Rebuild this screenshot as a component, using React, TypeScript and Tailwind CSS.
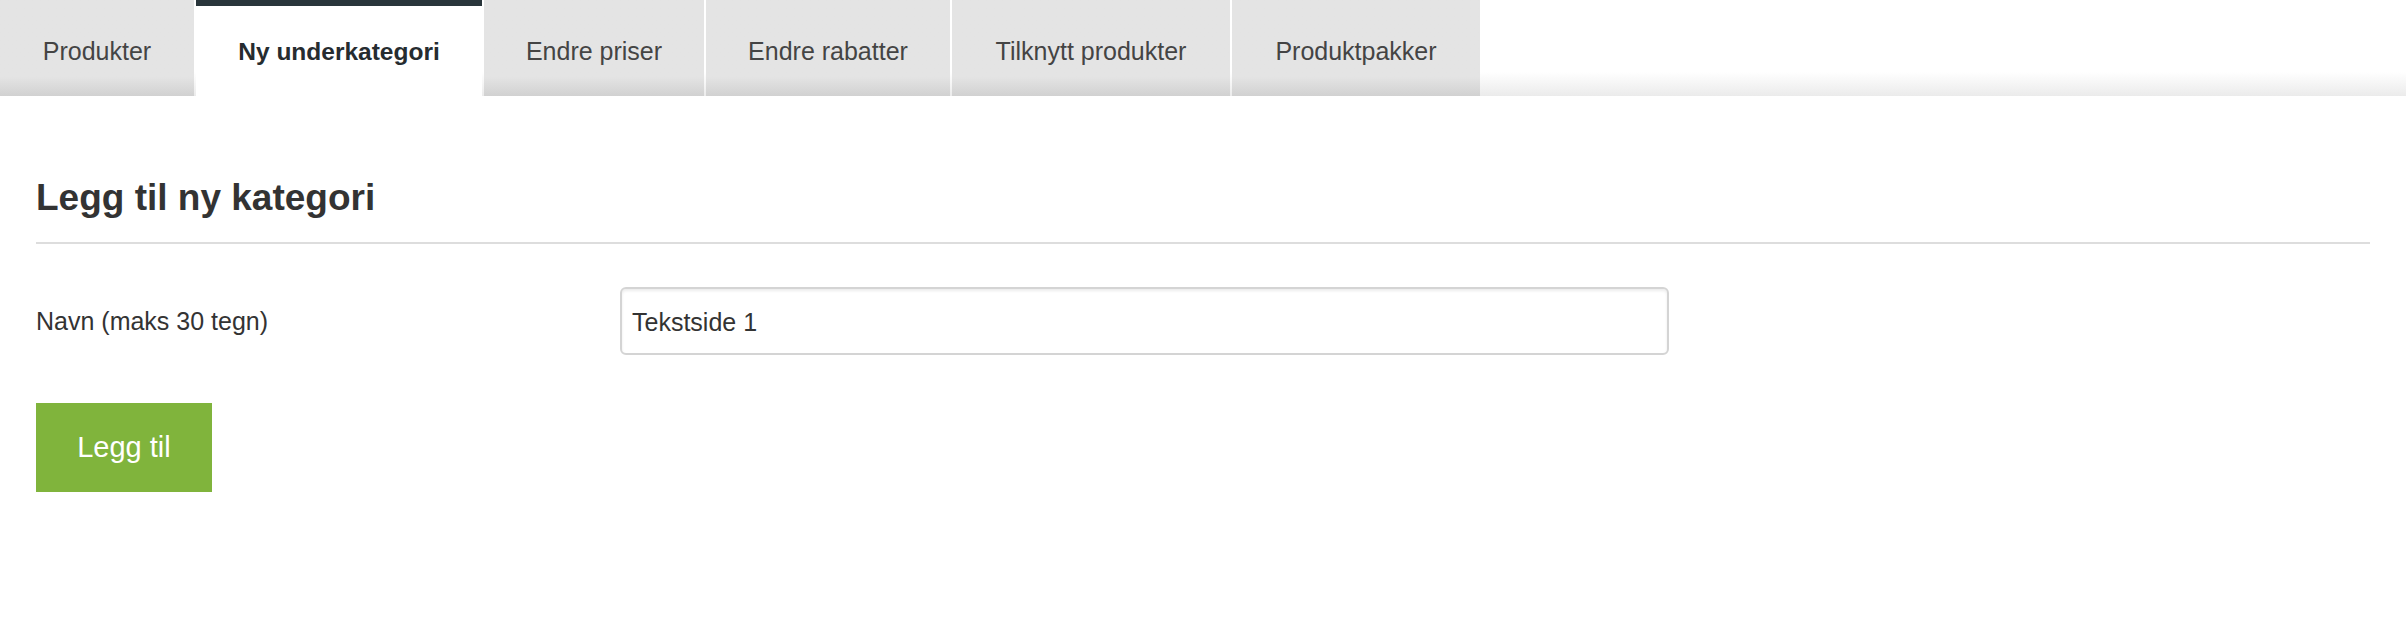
import { useState } from "react";

const tabs = [
  { label: "Produkter", width: "w-[194px]" },
  { label: "Ny underkategori", width: "w-[286px]" },
  { label: "Endre priser", width: "w-[220px]" },
  { label: "Endre rabatter", width: "w-[244px]" },
  { label: "Tilknytt produkter", width: "w-[278px]" },
  { label: "Produktpakker", width: "w-[248px]" },
];

export default function App() {
  const [active, setActive] = useState(1);
  const [name, setName] = useState("Tekstside 1");

  return (
    <div className="min-h-[642px] bg-white font-['Liberation_Sans',Arial,sans-serif] text-[#333]">
      {/* Tab bar */}
      <nav className="flex h-[96px] gap-[2px] bg-gradient-to-b from-white from-75% to-[#ebebeb]">
        {tabs.map((tab, i) =>
          i === active ? (
            <button
              key={tab.label}
              onClick={() => setActive(i)}
              className={`${tab.width} flex h-[96px] items-center justify-center border-t-[6px] border-[#29353b] bg-white pt-[2px] text-[24.5px] font-bold text-[#262c30]`}
            >
              {tab.label}
            </button>
          ) : (
            <button
              key={tab.label}
              onClick={() => setActive(i)}
              className={`${tab.width} flex h-[96px] items-center justify-center bg-gradient-to-b from-[#e4e4e4] from-80% to-[#d1d1d1] pt-[8px] text-[25px] text-[#444]`}
            >
              {tab.label}
            </button>
          )
        )}
      </nav>

      {/* Content */}
      <section className="px-[36px] pt-[80px]">
        <h1 className="border-b-2 border-[#dddddd] pb-[22px] text-[37px] leading-[44px] font-bold text-[#333]">
          Legg til ny kategori
        </h1>

        <div className="mt-[43px] flex items-center">
          <label className="w-[584px] text-[25px] leading-[30px] text-[#333]">Navn (maks 30 tegn)</label>
          <input
            value={name}
            onChange={(e) => setName(e.target.value)}
            className="h-[68px] w-[1049px] rounded-[6px] border-2 border-[#d4d4d4] bg-white px-[10px] pt-[2px] text-[25px] text-[#333] shadow-[inset_0_2px_3px_rgba(0,0,0,0.08)] outline-none"
          />
        </div>

        <button className="mt-[48px] flex h-[89px] w-[176px] items-center justify-center bg-[#80b43c] text-[29px] text-white">
          Legg til
        </button>
      </section>
    </div>
  );
}
